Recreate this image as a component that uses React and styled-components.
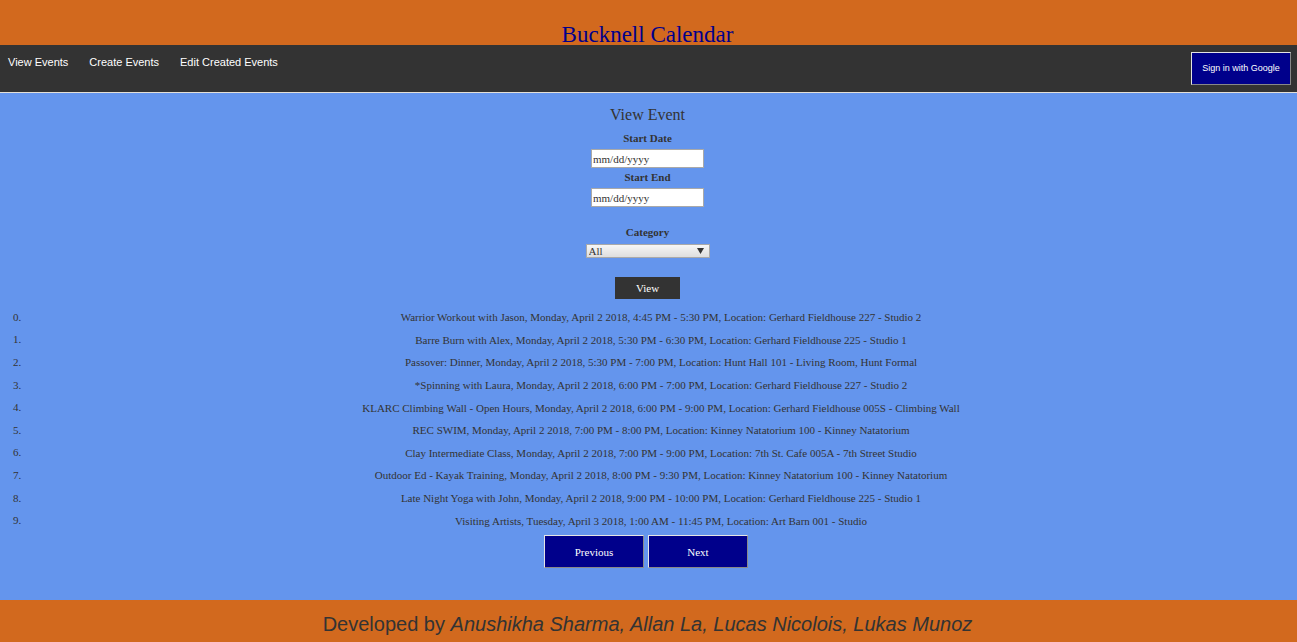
import React from "react";
import styled, { createGlobalStyle } from "styled-components";

const serif = '"Liberation Serif", "Times New Roman", serif';
const sans = '"Liberation Sans", Arial, sans-serif';

const GlobalStyle = createGlobalStyle`
  *, *::before, *::after { box-sizing: border-box; }
  body {
    margin: 0;
    background: #6495ed;
    color: #333;
    font: 11px/20px ${serif};
  }
`;

const Page = styled.div`
  display: flex;
  flex-direction: column;
  min-height: 100vh;
`;

const Header = styled.header`
  padding: 21px 2px 0 0;
  height: 45px;
  background: #d2691e;
  text-align: center;
`;

const Title = styled.h1`
  margin: 0;
  font-size: 23px;
  font-weight: 400;
  line-height: 28px;
  color: #00008b;
`;

const NavBar = styled.nav`
  display: flex;
  justify-content: space-between;
  align-items: flex-start;
  padding: 7px 6px 7px 8px;
  background: #333;
  border-bottom: 1px solid #e4e0d8;
`;

const NavLinks = styled.div`
  display: flex;
  gap: 21px;
`;

const NavLink = styled.a`
  font-family: ${sans};
  color: #fff;
  text-decoration: none;
`;

const BlueButton = styled.button`
  width: 100px;
  height: 33px;
  padding: ${(p) => (p.$small ? "0 0 2px" : "0")};
  border: 1px solid;
  border-color: #e4e4e4 #888 #888 #e4e4e4;
  background: #00008b;
  color: #fff;
  font-family: ${(p) => (p.$small ? sans : serif)};
  font-size: ${(p) => (p.$small ? 9 : 11)}px;
`;

const Main = styled.main`
  flex: 1;
  padding-bottom: 32px;
`;

const SearchForm = styled.form`
  display: flex;
  flex-direction: column;
  align-items: center;
  padding: 12px 2px 0 0;
`;

const Heading = styled.h2`
  margin: 0 0 3px;
  font-size: 16px;
  font-weight: 400;
  line-height: 20px;
`;

const Label = styled.label`
  font-weight: 700;
`;

const DateInput = styled.input`
  width: 113px;
  height: 19px;
  margin-top: 1px;
  padding: 1px;
  border: 1px solid #a9a9a9;
  background: #fff;
  color: #333;
  font: inherit;
  &::placeholder { color: #333; opacity: 1; }

  & + label { line-height: 19px; }
`;

const CategoryField = styled.div`
  display: flex;
  flex-direction: column;
  align-items: center;
  gap: 2px;
  margin: 15px 0 19px;
`;

const SelectWrap = styled.div`
  position: relative;
  display: flex;
`;

const Select = styled.select`
  appearance: none;
  width: 124px;
  height: 14px;
  padding: 0 2px;
  border: 1px solid #a9a9a9;
  border-radius: 0;
  background: linear-gradient(#f6f6f6, #dedede);
  color: #333;
  font: 11px/12px ${serif};
`;

const Arrow = styled.svg`
  position: absolute;
  right: 6px;
  top: 4px;
  pointer-events: none;
`;

const ViewButton = styled.button`
  width: 65px;
  height: 22px;
  padding: 0;
  border: 0;
  background: #333;
  color: #fff;
  font: inherit;
`;

const EventList = styled.ol`
  display: grid;
  grid-auto-rows: 1fr;
  min-height: 226px;
  margin: 7px 0 3px;
  padding: 0;
  list-style: none;
`;

const EventRow = styled.li`
  display: grid;
  grid-template-columns: 25px 1fr;
  align-items: center;
`;

const EventNumber = styled.span`
  padding: 0 0 1px 13px;
`;

const EventText = styled.span`
  text-align: center;
`;

const Pager = styled.div`
  display: flex;
  justify-content: center;
  gap: 4px;
  padding-right: 5px;
`;

const Footer = styled.footer`
  padding: 12px 2px 6px 0;
  background: #d2691e;
  font: 20px/24px ${sans};
  text-align: center;
`;

const events = [
  "Warrior Workout with Jason, Monday, April 2 2018, 4:45 PM - 5:30 PM, Location: Gerhard Fieldhouse 227 - Studio 2",
  "Barre Burn with Alex, Monday, April 2 2018, 5:30 PM - 6:30 PM, Location: Gerhard Fieldhouse 225 - Studio 1",
  "Passover: Dinner, Monday, April 2 2018, 5:30 PM - 7:00 PM, Location: Hunt Hall 101 - Living Room, Hunt Formal",
  "*Spinning with Laura, Monday, April 2 2018, 6:00 PM - 7:00 PM, Location: Gerhard Fieldhouse 227 - Studio 2",
  "KLARC Climbing Wall - Open Hours, Monday, April 2 2018, 6:00 PM - 9:00 PM, Location: Gerhard Fieldhouse 005S - Climbing Wall",
  "REC SWIM, Monday, April 2 2018, 7:00 PM - 8:00 PM, Location: Kinney Natatorium 100 - Kinney Natatorium",
  "Clay Intermediate Class, Monday, April 2 2018, 7:00 PM - 9:00 PM, Location: 7th St. Cafe 005A - 7th Street Studio",
  "Outdoor Ed - Kayak Training, Monday, April 2 2018, 8:00 PM - 9:30 PM, Location: Kinney Natatorium 100 - Kinney Natatorium",
  "Late Night Yoga with John, Monday, April 2 2018, 9:00 PM - 10:00 PM, Location: Gerhard Fieldhouse 225 - Studio 1",
  "Visiting Artists, Tuesday, April 3 2018, 1:00 AM - 11:45 PM, Location: Art Barn 001 - Studio",
];

export default function App() {
  return (
    <Page>
      <GlobalStyle />
      <Header>
        <Title>Bucknell Calendar</Title>
      </Header>
      <NavBar>
        <NavLinks>
          <NavLink href="#view">View Events</NavLink>
          <NavLink href="#create">Create Events</NavLink>
          <NavLink href="#edit">Edit Created Events</NavLink>
        </NavLinks>
        <BlueButton type="button" $small>Sign in with Google</BlueButton>
      </NavBar>
      <Main>
        <SearchForm onSubmit={(e) => e.preventDefault()}>
          <Heading>View Event</Heading>
          <Label htmlFor="start">Start Date</Label>
          <DateInput id="start" type="text" placeholder="mm/dd/yyyy" />
          <Label htmlFor="end">Start End</Label>
          <DateInput id="end" type="text" placeholder="mm/dd/yyyy" />
          <CategoryField>
            <Label htmlFor="category">Category</Label>
            <SelectWrap>
              <Select id="category">
                <option>All</option>
              </Select>
              <Arrow width="7" height="6" viewBox="0 0 7 6" aria-hidden="true">
                <path d="M0 0h7L3.5 6z" fill="#333" />
              </Arrow>
            </SelectWrap>
          </CategoryField>
          <ViewButton type="submit">View</ViewButton>
        </SearchForm>
        <EventList>
          {events.map((text, i) => (
            <EventRow key={text}>
              <EventNumber>{i}.</EventNumber>
              <EventText>{text}</EventText>
            </EventRow>
          ))}
        </EventList>
        <Pager>
          <BlueButton type="button">Previous</BlueButton>
          <BlueButton type="button">Next</BlueButton>
        </Pager>
      </Main>
      <Footer>
        Developed by <em>Anushikha Sharma, Allan La, Lucas Nicolois, Lukas Munoz</em>
      </Footer>
    </Page>
  );
}
